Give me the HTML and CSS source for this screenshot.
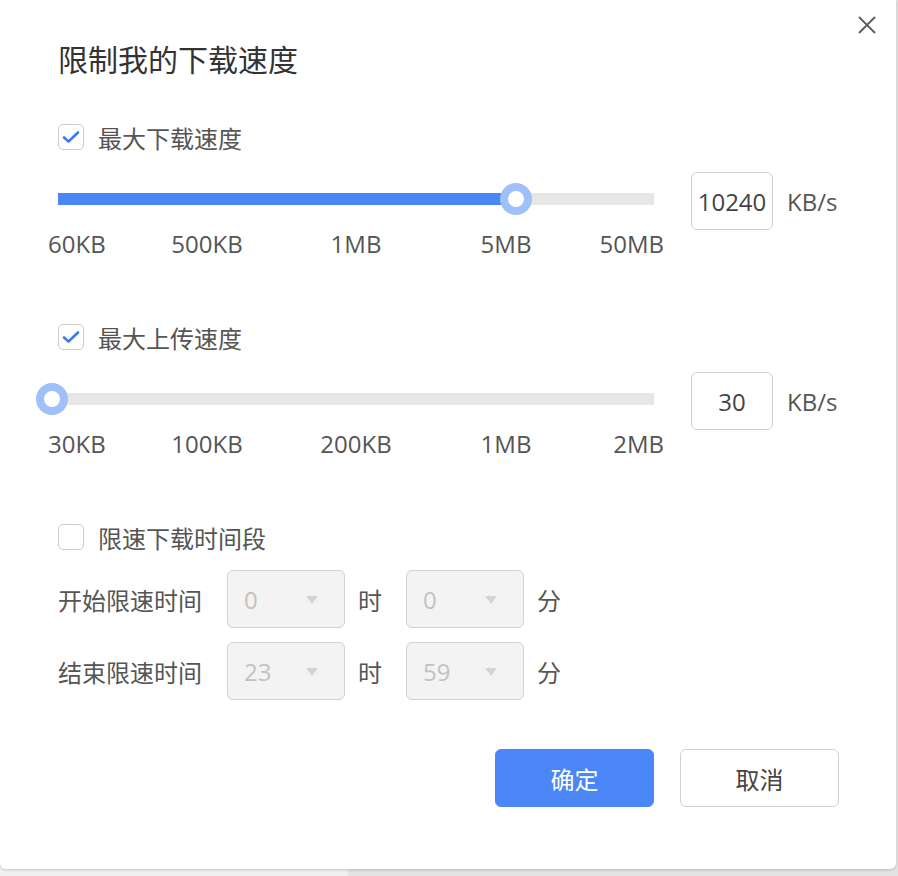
FILE: index.html
```
<!DOCTYPE html>
<html lang="zh-CN">
<head>
<meta charset="utf-8">
<title>限制我的下载速度</title>
<link rel="stylesheet" href="styles.css">
</head>
<body>
<div class="dialog">
  <button class="close" aria-label="关闭">
    <svg width="20" height="20" viewBox="0 0 20 20"><path d="M2 2L18 18M18 2L2 18" stroke="#5a5a5a" stroke-width="1.8" fill="none"/></svg>
  </button>
  <h1 class="title">限制我的下载速度</h1>

  <div class="check-row first">
    <span class="checkbox checked">
      <svg width="18" height="14" viewBox="0 0 18 14"><path d="M2 7.5L6.5 11.5L16 2.5" stroke="#3a7bf2" stroke-width="2.6" fill="none" stroke-linecap="round" stroke-linejoin="round"/></svg>
    </span>
    <span class="check-label">最大下载速度</span>
  </div>
  <div class="slider-row">
    <div class="slider">
      <div class="track"><div class="fill" style="width:458px"></div></div>
      <span class="thumb" style="left:442px"></span>
    </div>
    <div class="num-box">10240</div>
    <span class="unit">KB/s</span>
  </div>
  <div class="ticks">
    <span>60KB</span><span>500KB</span><span>1MB</span><span>5MB</span><span>50MB</span>
  </div>

  <div class="check-row second">
    <span class="checkbox checked">
      <svg width="18" height="14" viewBox="0 0 18 14"><path d="M2 7.5L6.5 11.5L16 2.5" stroke="#3a7bf2" stroke-width="2.6" fill="none" stroke-linecap="round" stroke-linejoin="round"/></svg>
    </span>
    <span class="check-label">最大上传速度</span>
  </div>
  <div class="slider-row">
    <div class="slider">
      <div class="track"><div class="fill" style="width:0px"></div></div>
      <span class="thumb" style="left:-22px"></span>
    </div>
    <div class="num-box">30</div>
    <span class="unit">KB/s</span>
  </div>
  <div class="ticks">
    <span>30KB</span><span>100KB</span><span>200KB</span><span>1MB</span><span>2MB</span>
  </div>

  <div class="check-row second">
    <span class="checkbox"></span>
    <span class="check-label">限速下载时间段</span>
  </div>
  <div class="time-row first">
    <span class="time-label">开始限速时间</span>
    <div class="select"><span>0</span><i class="arrow"></i></div>
    <span class="time-unit">时</span>
    <div class="select"><span>0</span><i class="arrow"></i></div>
    <span class="time-unit">分</span>
  </div>
  <div class="time-row">
    <span class="time-label">结束限速时间</span>
    <div class="select"><span>23</span><i class="arrow"></i></div>
    <span class="time-unit">时</span>
    <div class="select"><span>59</span><i class="arrow"></i></div>
    <span class="time-unit">分</span>
  </div>

  <div class="actions">
    <button class="btn primary">确定</button>
    <button class="btn">取消</button>
  </div>
</div>
</body>
</html>
```
FILE: styles.css
```
html, body {
  margin: 0;
  padding: 0;
}
body {
  width: 898px;
  height: 876px;
  overflow: hidden;
  background: linear-gradient(to right, #f0f0f0 348px, #e3e3e3 348px);
  font-family: "Open Sans", "Noto Sans CJK SC", sans-serif;
  color: #555;
}
.dialog {
  position: relative;
  width: 896px;
  height: 869px;
  box-sizing: border-box;
  padding: 38px 58px 0 58px;
  background: #fff;
  border-radius: 0 0 6px 6px;
  box-shadow: 0 1px 3px rgba(0,0,0,0.18);
}
.close {
  position: absolute;
  top: 15px;
  right: 19px;
  width: 20px;
  height: 20px;
  padding: 0;
  border: 0;
  background: none;
  display: flex;
}
.title {
  margin: 0;
  height: 40px;
  line-height: 40px;
  font-size: 30px;
  font-weight: normal;
  color: #333;
  font-family: "Noto Sans CJK SC", sans-serif;
}
.check-row {
  display: flex;
  align-items: center;
  height: 30px;
}
.check-row.first { margin-top: 44px; }
.check-row.second { margin-top: 64px; }
.checkbox {
  width: 26px;
  height: 26px;
  box-sizing: border-box;
  border: 1.5px solid #cdcdcd;
  border-radius: 5px;
  display: flex;
  align-items: center;
  justify-content: center;
  background: #fff;
}
.check-label {
  margin-left: 14px;
  font-size: 24px;
  color: #555;
  font-family: "Noto Sans CJK SC", sans-serif;
}
.slider-row {
  display: flex;
  align-items: center;
  height: 58px;
  margin-top: 20px;
}
.slider {
  position: relative;
  width: 596px;
  height: 12px;
  margin-bottom: 4px;
}
.track {
  width: 596px;
  height: 12px;
  background: #e6e6e6;
}
.fill {
  height: 12px;
  background: #4a86f5;
}
.thumb {
  position: absolute;
  top: -10px;
  width: 32px;
  height: 32px;
  box-sizing: border-box;
  border: 8px solid #9fc0f8;
  border-radius: 50%;
  background: #fff;
}
.num-box {
  margin-left: 37px;
  width: 82px;
  height: 58px;
  box-sizing: border-box;
  border: 1.5px solid #cfcfcf;
  border-radius: 6px;
  display: flex;
  align-items: center;
  justify-content: center;
  font-size: 24px;
  color: #444;
}
.unit {
  margin-left: 14px;
  font-size: 24px;
  color: #555;
}
.ticks {
  display: grid;
  grid-template-columns: 90px 138px 160px 140px 88px;
  margin-left: -10px;
  height: 28px;
  line-height: 28px;
  font-size: 24px;
  color: #555;
}
.ticks span { text-align: center; }
.ticks span:first-child { text-align: left; }
.ticks span:last-child { text-align: right; }
.time-row {
  display: flex;
  align-items: center;
  height: 58px;
  margin-top: 14px;
  font-family: "Noto Sans CJK SC", sans-serif;
}
.time-row.first { margin-top: 18px; }
.time-label {
  width: 144px;
  font-size: 24px;
  color: #555;
  white-space: nowrap;
}
.select {
  margin-left: 25px;
  width: 118px;
  height: 58px;
  box-sizing: border-box;
  border: 1.5px solid #d2d2d2;
  border-radius: 6px;
  background: #f3f3f3;
  display: flex;
  align-items: center;
  padding-left: 16px;
  position: relative;
  font-family: "Open Sans", sans-serif;
  font-size: 24px;
  color: #c2c2c2;
}
.time-unit + .select { margin-left: 24px; }
.arrow {
  position: absolute;
  left: 78px;
  top: 25px;
  width: 0;
  height: 0;
  border-left: 6px solid transparent;
  border-right: 6px solid transparent;
  border-top: 8px solid #d4d4d4;
}
.time-unit {
  margin-left: 13px;
  font-size: 24px;
  color: #555;
}
.actions {
  display: flex;
  justify-content: flex-end;
  gap: 26px;
  margin-top: 49px;
  margin-right: -1px;
}
.btn {
  width: 159px;
  height: 58px;
  box-sizing: border-box;
  border: 1.5px solid #d0d0d0;
  border-radius: 6px;
  background: #fff;
  font-family: "Noto Sans CJK SC", sans-serif;
  font-size: 24px;
  color: #444;
  padding: 0;
}
.btn.primary {
  background: #4a86f5;
  border-color: #4a86f5;
  color: #fff;
}
```
